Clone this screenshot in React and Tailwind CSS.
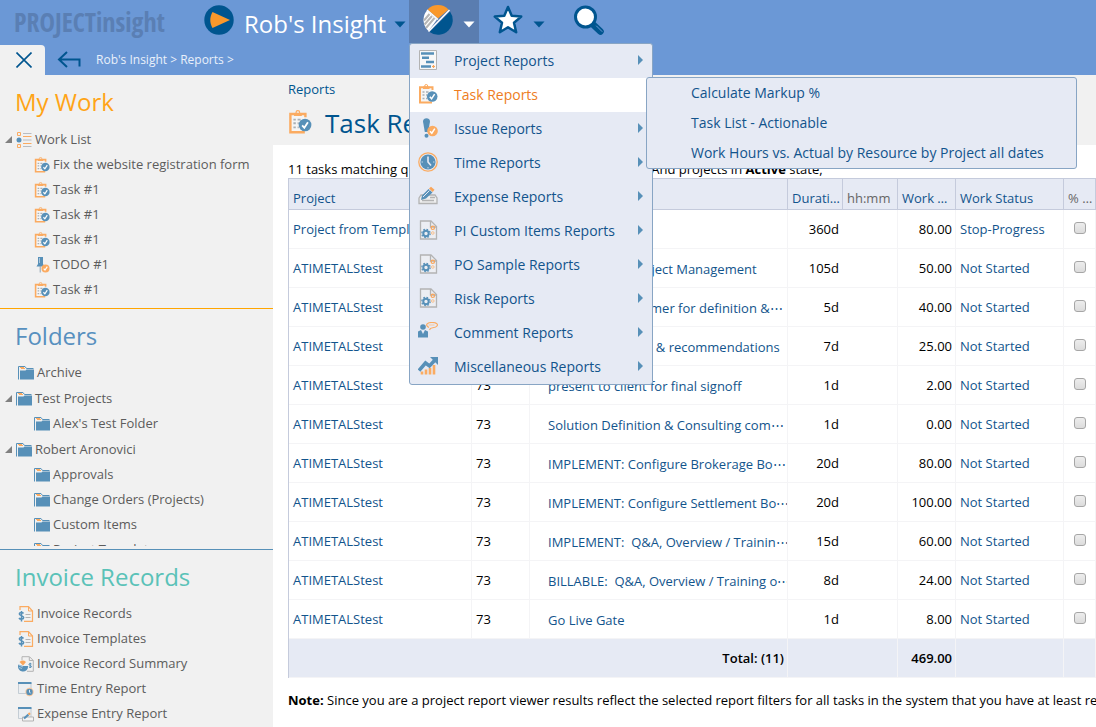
const MENU = [
  { label: 'Project Reports', icon: GanttIcon, more: true },
  { label: 'Task Reports', icon: TaskIcon, active: true },
  { label: 'Issue Reports', icon: IssueIcon, more: true },
  { label: 'Time Reports', icon: ClockIcon, more: true },
  { label: 'Expense Reports', icon: ExpenseIcon, more: true },
  { label: 'PI Custom Items Reports', icon: CustomIcon, more: true },
  { label: 'PO Sample Reports', icon: CustomIcon, more: true },
  { label: 'Risk Reports', icon: CustomIcon, more: true },
  { label: 'Comment Reports', icon: CommentIcon, more: true },
  { label: 'Miscellaneous Reports', icon: TrendIcon, more: true },
];

const SUBMENU = [
  'Calculate Markup %',
  'Task List - Actionable',
  'Work Hours vs. Actual by Resource by Project all dates',
];

const WORK_LIST = [
  { label: 'Work List', icon: ListIcon, parent: true },
  { label: 'Fix the website registration form', icon: TaskIcon, child: true },
  { label: 'Task #1', icon: TaskIcon, child: true },
  { label: 'Task #1', icon: TaskIcon, child: true },
  { label: 'Task #1', icon: TaskIcon, child: true },
  { label: 'TODO #1', icon: TodoIcon, child: true },
  { label: 'Task #1', icon: TaskIcon, child: true },
];

const FOLDERS = [
  { label: 'Archive', icon: FolderIcon },
  { label: 'Test Projects', icon: FolderIcon, parent: true },
  { label: "Alex's Test Folder", icon: FolderIcon, child: true },
  { label: 'Robert Aronovici', icon: FolderIcon, parent: true },
  { label: 'Approvals', icon: FolderIcon, child: true },
  { label: 'Change Orders (Projects)', icon: FolderIcon, child: true },
  { label: 'Custom Items', icon: FolderIcon, child: true },
  { label: 'Project Templates', icon: FolderIcon, child: true },
];

const INVOICES = [
  { label: 'Invoice Records', icon: InvoiceIcon },
  { label: 'Invoice Templates', icon: InvoiceIcon },
  { label: 'Invoice Record Summary', icon: SummaryIcon },
  { label: 'Time Entry Report', icon: TimeEntryIcon },
  { label: 'Expense Entry Report', icon: ExpenseEntryIcon },
];

const ROWS = [
  { project: 'Project from Template', id: '12', name: 'Planning', duration: '360d', work: '80.00', status: 'Stop-Progress' },
  { project: 'ATIMETALStest', id: '73', name: 'COMPLETED: Project Management', duration: '105d', work: '50.00', status: 'Not Started' },
  { project: 'ATIMETALStest', id: '73', name: 'Check with customer for definition &⋯', duration: '5d', work: '40.00', status: 'Not Started' },
  { project: 'ATIMETALStest', id: '73', name: 'Develop findings, & recommendations', duration: '7d', work: '25.00', status: 'Not Started' },
  { project: 'ATIMETALStest', id: '73', name: 'present to client for final signoff', duration: '1d', work: '2.00', status: 'Not Started' },
  { project: 'ATIMETALStest', id: '73', name: 'Solution Definition & Consulting com⋯', duration: '1d', work: '0.00', status: 'Not Started' },
  { project: 'ATIMETALStest', id: '73', name: 'IMPLEMENT: Configure Brokerage Bo⋯', duration: '20d', work: '80.00', status: 'Not Started' },
  { project: 'ATIMETALStest', id: '73', name: 'IMPLEMENT: Configure Settlement Bo⋯', duration: '20d', work: '100.00', status: 'Not Started' },
  { project: 'ATIMETALStest', id: '73', name: 'IMPLEMENT:\u00a0 Q&A, Overview / Trainin⋯', duration: '15d', work: '60.00', status: 'Not Started' },
  { project: 'ATIMETALStest', id: '73', name: 'BILLABLE:\u00a0 Q&A, Overview / Training o⋯', duration: '8d', work: '24.00', status: 'Not Started' },
  { project: 'ATIMETALStest', id: '73', name: 'Go Live Gate', duration: '1d', work: '8.00', status: 'Not Started' },
];

export default function App() {
  return (
    <div className="flex min-h-screen flex-col overflow-hidden bg-white font-['Open_Sans',sans-serif] text-[13px] text-black">
      <Header />
      <div className="flex flex-1">
        <Sidebar />
        <Report />
      </div>
    </div>
  );
}

function Header() {
  return (
    <header className="bg-[#6b98d6]">
      <div className="flex h-[45px] items-start">
        <a href="#home" className="ml-3.5 w-[190px] font-['Open_Sans_Condensed','Open_Sans',sans-serif] text-[26px] leading-[45px] font-bold text-[#5a7fb4]">
          PROJECTinsight
        </a>
        <button type="button" className="flex h-[43px] w-[205px] items-center pb-1">
          <PlayIcon />
          <span className="ml-2.5 pt-2 text-[24px] leading-8 whitespace-nowrap text-white">Rob's Insight</span>
          <Caret className="mt-2.5 ml-2 text-[#00558f]" />
        </button>
        <div className="relative z-10">
          <button type="button" aria-label="Reports" aria-expanded="true" className="flex h-[43px] w-[70px] items-center bg-[#5a7db0] pb-1 pl-3.5">
            <PieIcon />
            <Caret className="mt-2.5 ml-2.5 text-white" />
          </button>
          <ReportsMenu />
        </div>
        <button type="button" aria-label="Favorites" className="ml-3.5 flex h-[43px] items-center pb-1">
          <StarIcon />
          <Caret className="mt-2.5 ml-2.5 text-[#00558f]" />
        </button>
        <button type="button" aria-label="Search" className="ml-7 flex h-[43px] items-center pb-1">
          <SearchIcon />
        </button>
      </div>
      <div className="flex h-[30px] items-center">
        <button type="button" aria-label="Close panel" className="flex h-full w-[45px] items-center justify-center rounded-tr-sm bg-[#f1f1f1]">
          <svg viewBox="0 0 16 16" className="ml-0.5 h-4 w-4" stroke="#00558f" strokeWidth="1.6">
            <path d="M.5.5l15 15M15.5.5l-15 15" />
          </svg>
        </button>
        <button type="button" aria-label="Back" className="ml-3 pb-0.5">
          <svg viewBox="0 0 24 17" className="h-[17px] w-6" fill="none" stroke="#00558f" strokeWidth="2">
            <path d="M10 1L2 8.500l8 7.500M2 8.500h20.500V15.500" />
          </svg>
        </button>
        <nav aria-label="Breadcrumb" className="ml-[15px] text-[12px] text-[#e9f0fa]">
          <a href="#insight">Rob's Insight</a> &gt; <a href="#reports">Reports</a> &gt;
        </nav>
      </div>
    </header>
  );
}

function ReportsMenu() {
  return (
    <div className="absolute top-[43px] left-0 w-[244px] rounded-[3px] border border-[#88a5c4] bg-[#e6eaf4] text-[14px]">
      <ul>
        {MENU.map((item) => {
          const Icon = item.icon;
          return (
            <li key={item.label}>
              <a
                href="#report"
                className={`flex h-[34px] items-center pr-[9px] pb-0.5 pl-2 ${item.active ? 'bg-white text-[#ee7d22]' : 'text-[#12548c]'}`}
              >
                <Icon className="h-5 w-5" />
                <span className="ml-4 flex-1">{item.label}</span>
                {item.more && <span className="h-0 w-0 border-y-[5px] border-l-[5px] border-y-transparent border-l-[#5790b8]" />}
              </a>
            </li>
          );
        })}
      </ul>
      <ul className="absolute top-[33px] left-[236px] w-[431px] rounded-[3px] border border-[#88a5c4] bg-[#e6eaf4]">
        {SUBMENU.map((label) => (
          <li key={label}>
            <a href="#report" className="flex h-[30px] items-center pb-0.5 pl-11 whitespace-nowrap text-[#12548c]">{label}</a>
          </li>
        ))}
      </ul>
    </div>
  );
}

function Sidebar() {
  return (
    <aside className="w-[273px] shrink-0 bg-[#f1f1f1] text-[#5c5c5c]">
      <Panel title="My Work" tone="text-[#ffa417]" line="border-b border-b-[#ffa500] pb-1.5" items={WORK_LIST} />
      <Panel title="Folders" tone="text-[#5790bf]" line="border-b border-b-[#5790b8] pb-[3px]" listClass="h-[186px] overflow-hidden" items={FOLDERS} />
      <Panel title="Invoice Records" tone="text-[#5ac2b8]" items={INVOICES} />
    </aside>
  );
}

function Panel({ title, tone, line = '', listClass = '', items }) {
  return (
    <section className={line}>
      <h2 className={`h-[51px] pt-[11px] pl-[15px] text-[24px] leading-8 ${tone}`}>{title}</h2>
      <ul className={listClass}>
        {items.map((item, i) => (
          <TreeRow key={i} item={item} />
        ))}
      </ul>
    </section>
  );
}

function TreeRow({ item }) {
  const Icon = item.icon;
  const box = item.parent ? 'h-[26px] pt-0.5 pl-1' : item.child ? 'h-[25px] pl-[34px]' : 'h-[25px] pl-[18px]';
  return (
    <li className={`flex items-center ${box}`}>
      {item.parent && (
        <svg viewBox="0 0 8 8" className="mr-1 h-2 w-2"><path d="M8 0v7H1z" fill="#808080" /></svg>
      )}
      <Icon className="h-4 w-4 shrink-0" />
      <a href="#item" className="ml-[3px] whitespace-nowrap">{item.label}</a>
    </li>
  );
}

const HEAD = 'border-t border-r border-b border-[#c5cbdc] bg-[#e6eaf4] pt-2.5 pl-1 text-left font-normal truncate';
const CELL = 'border-r border-b border-[#f4f4f6] px-1';

function Report() {
  return (
    <main className="min-w-0 flex-1">
      <div className="h-[70px] bg-[#f1f1f1] pl-[15px] text-[#00558f]">
        <p className="pt-1 leading-5"><a href="#reports">Reports</a></p>
        <div className="flex items-center gap-[13px]">
          <TaskIcon className="mt-1 h-6 w-6" />
          <h1 className="pt-1.5 text-[26px] leading-9">Task Reports</h1>
        </div>
      </div>
      <div className="pt-[15px] pl-[15px]">
        <p className="leading-[18px] whitespace-nowrap">
          11 tasks matching query. Displaying all tasks in <b>Active</b> state And projects in <b>Active</b> state,
        </p>
        <table className="w-full table-fixed border-separate border-spacing-0 border-l border-[#c5cbdc]">
          <colgroup>
            <col className="w-[183px]" />
            <col className="w-[58px]" />
            <col />
            <col className="w-[55px]" />
            <col className="w-[55px]" />
            <col className="w-[58px]" />
            <col className="w-[108px]" />
            <col className="w-8" />
          </colgroup>
          <thead>
            <tr className="h-8 text-[#12548c]">
              <th className={HEAD}>Project</th>
              <th className={HEAD}>Number</th>
              <th className={HEAD}>Name</th>
              <th className={HEAD}>Duration</th>
              <th className={`${HEAD} text-[#666]`}>hh:mm</th>
              <th className={HEAD}>Work Hours</th>
              <th className={HEAD}>Work Status</th>
              <th className={`${HEAD} text-[#666]`}>% Complete</th>
            </tr>
          </thead>
          <tbody>
            {ROWS.map((row, i) => (
              <tr key={i} className="h-[39px]">
                <td className={`${CELL} pt-0.5`}><a href="#project" className="text-[#12548c]">{row.project}</a></td>
                <td className={`${CELL} pt-0.5`}>{row.id}</td>
                <td className={`${CELL} overflow-hidden pt-1 pl-[18px] whitespace-nowrap`}>
                  <a href="#task" className="text-[#12548c]">{row.name}</a>
                </td>
                <td className="border-b border-[#f4f4f6] pt-0.5 pr-1 text-right">{row.duration}</td>
                <td className={CELL} />
                <td className={`${CELL} pt-0.5 pr-[3px] text-right`}>{row.work}</td>
                <td className={`${CELL} pt-0.5 text-[#12548c]`}>{row.status}</td>
                <td className={`${CELL} pb-1 text-center`}>
                  <input
                    type="checkbox"
                    aria-label={`Complete ${row.name}`}
                    className="h-3 w-3 appearance-none rounded-[3px] border border-[#a6a6a6] bg-linear-to-b from-[#ededed] to-[#dcdcdc] align-middle"
                  />
                </td>
              </tr>
            ))}
          </tbody>
          <tfoot>
            <tr className="h-[39px] bg-[#e6eaf4] text-right font-semibold">
              <td colSpan={3} className={`${CELL} pt-0.5 pr-[3px]`}>Total: (11)</td>
              <td colSpan={2} className={CELL} />
              <td className={`${CELL} pt-0.5 pr-[3px]`}>469.00</td>
              <td className={CELL} />
              <td className={CELL} />
            </tr>
          </tfoot>
        </table>
        <p className="pt-3 leading-5 whitespace-nowrap">
          <b>Note:</b> Since you are a project report viewer results reflect the selected report filters for all tasks in the system that you have at least read access to.
        </p>
      </div>
    </main>
  );
}

function Caret({ className }) {
  return (
    <svg viewBox="0 0 12 7" className={`h-[7px] w-3 shrink-0 ${className}`}><path d="M.5.5h11L6 6.500z" fill="currentColor" /></svg>
  );
}

function PlayIcon() {
  return (
    <svg viewBox="0 0 30 30" className="h-[30px] w-[30px] shrink-0">
      <circle cx="15" cy="15" r="14.700" fill="#00558f" />
      <path d="M8.500 7L26 15 8.500 23C5.500 18 5.500 12 8.500 7z" fill="#f9982b" />
    </svg>
  );
}

function PieIcon() {
  return (
    <svg viewBox="0 0 30 30" className="h-[30px] w-[30px]">
      <path d="M15 13.500L4.500 4.500a14.700 14.700 0 0 1 21 0z" fill="#f9982b" />
      <path d="M4 5.500l10 9L5.500 26A14.700 14.700 0 0 1 4 5.500z" fill="#fff" />
      <path d="M1 15.500l5.500-6.500M1.500 19.500L9 11M3 23l8.500-10" stroke="#b5b5b5" strokeWidth="2" />
      <path d="M27 6.500a14.700 14.700 0 0 1-20.500 20.500z" fill="#00558f" />
      <path d="M4 5l11 9.500M26.500 5L5.500 26.500" stroke="#fff" strokeWidth="1.500" />
    </svg>
  );
}

function StarIcon() {
  return (
    <svg viewBox="0 0 30 30" className="h-[30px] w-[30px]">
      <path d="M15 2l3.700 8.800 9.500.8-7.200 6.200 2.200 9.400L15 22.200l-8.200 5 2.200-9.400-7.200-6.200 9.500-.8z" fill="#fff" stroke="#00558f" strokeWidth="2.500" strokeLinejoin="round" />
    </svg>
  );
}

function SearchIcon() {
  return (
    <svg viewBox="0 0 32 30" className="h-[30px] w-8">
      <path d="M20 19.500l7.500 7" stroke="#00558f" strokeWidth="6.500" strokeLinecap="round" />
      <path d="M23.500 21l5.500 5.500" stroke="#6b98d6" strokeWidth="1" strokeLinecap="round" />
      <circle cx="12.500" cy="12" r="10" fill="#fff" stroke="#00558f" strokeWidth="3" />
    </svg>
  );
}

function TaskIcon({ className }) {
  return (
    <svg viewBox="0 0 20 20" className={className}>
      <path d="M14.500 6V3.300H2V18.500h12" fill="#f5f5f5" stroke="#fbab61" strokeWidth="2" />
      <path d="M5 2.500h6.500V5H5z" fill="#fbab61" />
      <circle cx="8.200" cy="2" r="1.500" fill="none" stroke="#fbab61" />
      <path d="M4.500 8h2M4.500 11h2M4.500 14.500h2M8 8h2.500M8 11h1M8 14.500h1" stroke="#aab0b5" strokeWidth="1.600" />
      <circle cx="14.200" cy="12.500" r="5.300" fill="#5790b8" />
      <path d="M11.800 12.800l1.800 2 3-4.600" fill="none" stroke="#fff" strokeWidth="1.500" />
    </svg>
  );
}

function GanttIcon({ className }) {
  return (
    <svg viewBox="0 0 20 20" className={className}>
      <path d="M1.500.5h17v19h-17z" fill="#f8f8f8" stroke="#b3b3b3" />
      <path d="M3 3.500h13M4 7.700h7M8 12h8M3 16.500h10" stroke="#5790b8" strokeWidth="2.500" />
      <path d="M15.500 15v3M14 16.500h3" stroke="#f9a55a" strokeWidth="1.200" />
    </svg>
  );
}

function IssueIcon({ className }) {
  return (
    <svg viewBox="0 0 20 20" className={className}>
      <path d="M5 3.500C5-.8 12-.8 12 3.500L10.200 14H6.800z" fill="#5790b8" />
      <circle cx="8.500" cy="17.700" r="2" fill="#5790b8" />
      <circle cx="14.500" cy="13" r="5.300" fill="#fbab61" />
      <path d="M12 13.200l1.800 2 3-4.600" fill="none" stroke="#fff" strokeWidth="1.500" />
    </svg>
  );
}

function ClockIcon({ className }) {
  return (
    <svg viewBox="0 0 20 20" className={className}>
      <circle cx="10" cy="10" r="9.200" fill="#e6eaf4" stroke="#fbab61" strokeWidth="1.300" />
      <circle cx="10" cy="10" r="7.600" fill="#5790b8" />
      <path d="M10 4.500V10l3 3.500" fill="none" stroke="#e6eaf4" strokeWidth="1.600" />
      <path d="M3.500 10h1.500M15 10h1.500M10 15v1.500" stroke="#c5d6e6" />
    </svg>
  );
}

function ExpenseIcon({ className }) {
  return (
    <svg viewBox="0 0 20 20" className={className}>
      <path d="M1 12l2-3h14l2 3v5.500H1z" fill="#eee" stroke="#b3b3b3" strokeWidth="1.300" />
      <path d="M12 11.500h5M4 14.500h12" stroke="#b3b3b3" strokeWidth="1.300" />
      <path d="M3 14l1-4.500L10.500 3l4 3.500L8 12.500z" fill="#5790b8" />
      <path d="M5 11l6.500-6.500" stroke="#e6eaf4" />
      <path d="M11 2.500l2-1.800 3.500 3-1.800 2.200z" fill="#f9a55a" />
    </svg>
  );
}

function CustomIcon({ className }) {
  return (
    <svg viewBox="0 0 20 20" className={className} fill="none">
      <path d="M2.500 1H13l5.500 5.500V19h-16z" fill="#eceef3" stroke="#b3b3b3" strokeWidth="1.300" />
      <path d="M12.500 1v6h6" stroke="#b3b3b3" strokeWidth="1.300" />
      <circle cx="8" cy="13.500" r="2.700" stroke="#5790b8" strokeWidth="2" />
      <circle cx="8" cy="13.500" r="4.200" stroke="#5790b8" strokeWidth="1.200" strokeDasharray="1.650 1.650" />
      <circle cx="14.800" cy="7.800" r="1.700" stroke="#f9a55a" strokeWidth="1.200" />
      <circle cx="14.800" cy="13" r="1.300" stroke="#f9c08c" />
    </svg>
  );
}

function CommentIcon({ className }) {
  return (
    <svg viewBox="0 0 20 20" className={className}>
      <circle cx="5" cy="5" r="2.800" fill="#5790b8" />
      <path d="M0 15.500V9.500l3-1.500L5 12l2-4 3 1.500v6z" fill="#5790b8" />
      <path d="M11 5.500C6 2.500 10 .5 14 .5s6.500 1.500 5 3.500-5.500 1.500-6.500 2.500L11.500 8" fill="none" stroke="#fbab61" strokeWidth="1.200" />
      <path d="M10.500 3h6" stroke="#f9c69a" />
    </svg>
  );
}

function TrendIcon({ className }) {
  return (
    <svg viewBox="0 0 20 20" className={className}>
      <path d="M4 18.500v-3M8 18.500v-5M12 18.500V12M16 18.500V9" stroke="#fbab61" strokeWidth="2.600" />
      <path d="M1 14.500L7.500 7l4 3L17 4" fill="none" stroke="#5790b8" strokeWidth="3.500" />
      <path d="M12 1h8v8z" fill="#5790b8" />
    </svg>
  );
}

function ListIcon({ className }) {
  return (
    <svg viewBox="0 0 16 16" className={className} fill="none">
      <path d="M1.500.5h3v3h-3zM1.500 12.500h3v3h-3z" stroke="#fbab61" />
      <circle cx="3" cy="8" r="2.500" fill="#5790b8" />
      <path d="M7 1.500h8.500M7 8h8.500M7 14.500h8.500" stroke="#b9bcc0" />
      <path d="M7 4.500h8.500M7 11.500h8.500" stroke="#fbab61" />
    </svg>
  );
}

function TodoIcon({ className }) {
  return (
    <svg viewBox="0 0 16 16" className={className}>
      <path d="M4 0h5v7l1.500 2.500H2.500L4 7z" fill="#5790b8" />
      <path d="M6.200 9v6.500" stroke="#8fa3b3" />
      <path d="M5.500 1v5" stroke="#a9c6dc" />
      <circle cx="11.500" cy="11.500" r="4" fill="#fbab61" />
      <path d="M9.700 11.600l1.300 1.500 2.300-3.400" fill="none" stroke="#fff" strokeWidth="1.200" />
    </svg>
  );
}

function FolderIcon({ className }) {
  return (
    <svg viewBox="0 0 16 16" className={className}>
      <path d="M.5 14.500V1.500h6.500l1.500 2h7" fill="none" stroke="#5790b8" />
      <path d="M2 2.500h4M3 3.500h4" stroke="#fbab61" />
      <path d="M2 5.500h5.500l1-1H16V14.500H2z" fill="#5790b8" />
    </svg>
  );
}

function InvoiceIcon({ className }) {
  return (
    <svg viewBox="0 0 16 16" className={className} fill="none">
      <path d="M2 4V.7h8.500L14.500 5v10.300H6" stroke="#fbab61" strokeWidth="1.200" />
      <path d="M10.500 1v4h4" stroke="#fbab61" />
      <path d="M7.500 8.500h5M7.500 11.500h5" stroke="#b3b3b3" />
      <path d="M5.500 7.500C4.500 6 1.200 6.300 1.300 8s4.400 1.600 4.400 3.600-3.700 2-4.700.4M3.500 5v10.500" stroke="#5790b8" strokeWidth="1.500" />
    </svg>
  );
}

function SummaryIcon({ className }) {
  return (
    <svg viewBox="0 0 16 16" className={className} fill="none">
      <path d="M4 4V.7h7.500L15.300 4.500v10.800H9" stroke="#b3b3b3" />
      <path d="M11.300 1v3.500h4" stroke="#b3b3b3" />
      <path d="M10 10a5 5 0 1 1-9.500-1.500L5 10z" fill="#5790b8" />
      <path d="M5 9.500L1.500 6a5 5 0 0 1 6.500 0z" fill="#f9a55a" />
      <path d="M1 9l4 2M1 11.500l3 1" stroke="#cfe0ee" strokeWidth=".7" />
      <path d="M13.500 8c-1-.9-2.500-.5-2.500.5s2.500.9 2.500 2-1.700 1.300-2.600.4M12.200 6.800v5.200" stroke="#5790b8" />
    </svg>
  );
}

function TimeEntryIcon({ className }) {
  return (
    <svg viewBox="0 0 16 16" className={className} fill="none">
      <path d="M.5 2h12.500v10.500H.5z" fill="#eceff2" stroke="#b9c4cd" strokeWidth=".8" />
      <path d="M0 2h13.500" stroke="#5790b8" strokeWidth="2" />
      <circle cx="11.500" cy="11" r="4.200" fill="#fbc79a" />
      <circle cx="11.500" cy="11" r="3.200" fill="#5790b8" />
      <path d="M11.500 8.800V11l1 1.300" stroke="#fff" strokeWidth=".8" />
    </svg>
  );
}

function ExpenseEntryIcon({ className }) {
  return (
    <svg viewBox="0 0 16 16" className={className} fill="none">
      <path d="M.5 2h12.500v10.500H.5z" fill="#eceff2" stroke="#b9c4cd" strokeWidth=".8" />
      <path d="M0 2h13.500" stroke="#5790b8" strokeWidth="2" />
      <path d="M4.500 11h11v4h-11z" fill="#f4f4f4" stroke="#b3b3b3" />
      <path d="M6 12.500L10.500 8.500" stroke="#5790b8" strokeWidth="2.200" />
      <path d="M10.500 8.500L12 7.200" stroke="#f9a55a" strokeWidth="2.200" />
    </svg>
  );
}
